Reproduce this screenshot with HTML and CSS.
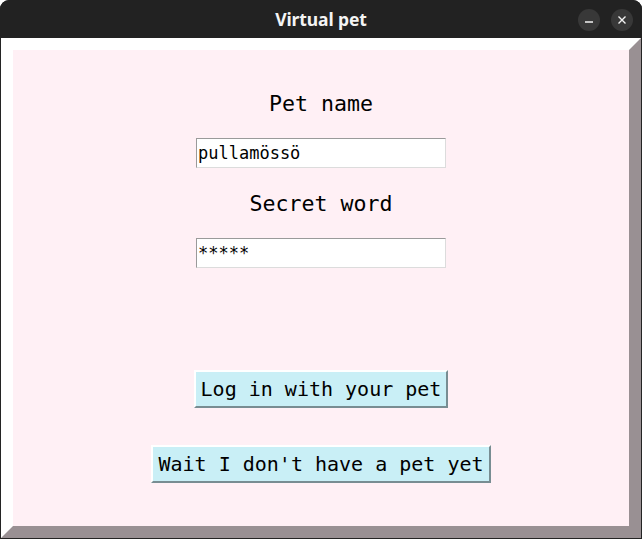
FILE: index.html
```html
<!DOCTYPE html>
<html>
<head>
<meta charset="utf-8">
<title>Virtual pet</title>
<link rel="stylesheet" href="styles.css">
</head>
<body>
<div class="window">
  <div class="titlebar">
    <span class="title">Virtual pet</span>
    <div class="controls">
      <span class="ctl">
        <svg width="22" height="22" viewBox="0 0 22 22"><line x1="7" y1="13" x2="15" y2="13" stroke="#f2f2f2" stroke-width="1.3"/></svg>
      </span>
      <span class="ctl">
        <svg width="22" height="22" viewBox="0 0 22 22"><path d="M7.5 7.5 L14.5 14.5 M14.5 7.5 L7.5 14.5" stroke="#f2f2f2" stroke-width="1.4"/></svg>
      </span>
    </div>
  </div>
  <div class="frame">
    <div class="content">
      <div class="label first">Pet name</div>
      <input class="entry e1" type="text" value="pullamössö" readonly>
      <div class="label second">Secret word</div>
      <input class="entry e2" type="text" value="*****" readonly>
      <button class="btn b1">Log in with your pet</button>
      <button class="btn b2">Wait I don't have a pet yet</button>
    </div>
  </div>
</div>
</body>
</html>
```
FILE: styles.css
```css
html, body {
  margin: 0;
  padding: 0;
  background: #ffffff;
}
.window {
  width: 642px;
  height: 539px;
  box-sizing: border-box;
  background: #242424;
  border-radius: 9px 9px 0 0;
  padding: 0 1px 1px 1px;
  display: flex;
  flex-direction: column;
  overflow: hidden;
}
.titlebar {
  height: 38px;
  flex: none;
  position: relative;
  display: flex;
  align-items: center;
  justify-content: center;
  background: #222222;
  margin: 0 -1px;
}
.title {
  font-family: "Noto Sans", "DejaVu Sans", sans-serif;
  font-weight: bold;
  font-size: 17.5px;
  color: #f4f4f4;
  letter-spacing: -0.1px;
}
.controls {
  position: absolute;
  right: 9px;
  top: 9px;
  display: flex;
  gap: 11px;
}
.ctl {
  width: 22px;
  height: 22px;
  border-radius: 50%;
  background: #383838;
  display: block;
}
.ctl svg { display: block; }
.frame {
  flex: 1;
  box-sizing: border-box;
  border-style: solid;
  border-width: 12px;
  border-color: #ffffff #999093 #999093 #ffffff;
  background: #fff0f5;
}
.content {
  display: flex;
  flex-direction: column;
  align-items: center;
  padding-top: 41px;
}
.label {
  font-family: "DejaVu Sans Mono", monospace;
  font-size: 21.6px;
  line-height: 26px;
  color: #000;
}
.label.second { margin-top: 23px; }
.entry {
  margin: 21px 0 0 0;
  width: 250px;
  height: 30px;
  box-sizing: border-box;
  border-style: solid;
  border-width: 1px;
  border-color: #9a9a9a #dcdcdc #dcdcdc #9a9a9a;
  background: #ffffff;
  padding: 0 1px;
  font-family: "DejaVu Sans Mono", monospace;
  font-size: 17px;
  color: #000;
  outline: none;
}
.btn {
  height: 38px;
  box-sizing: border-box;
  padding: 0 5px;
  margin: 0;
  border-style: solid;
  border-width: 2px;
  border-color: #ffffff #788d92 #788d92 #ffffff;
  border-radius: 0;
  background: #c9eff6;
  font-family: "DejaVu Sans Mono", monospace;
  font-size: 20px;
  line-height: 33px;
  color: #000;
}
.btn.b1 { margin-top: 102px; }
.btn.b2 { margin-top: 37px; }
```
